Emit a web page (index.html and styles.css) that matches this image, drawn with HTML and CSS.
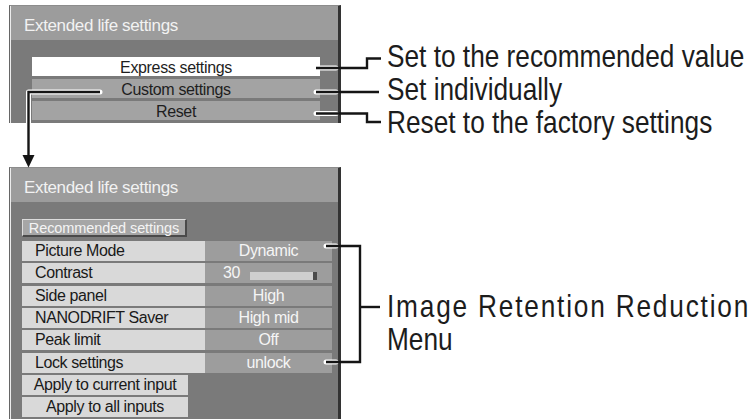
FILE: index.html
```html
<!DOCTYPE html>
<html lang="en">
<head>
<meta charset="utf-8">
<title>Extended life settings</title>
<link rel="stylesheet" href="styles.css">
</head>
<body>
<div class="page">
  <section class="group group-top">
    <div class="panel panel-top">
      <div class="frame">
        <div class="title">Extended life settings</div>
        <div class="body body-top">
          <div class="btn selected">Express settings</div>
          <div class="btn">Custom settings</div>
          <div class="btn">Reset</div>
        </div>
      </div>
    </div>
    <div class="notes notes-top">
      <p>Set to the recommended value</p>
      <p>Set individually</p>
      <p>Reset to the factory settings</p>
    </div>
  </section>

  <section class="group group-bottom">
    <div class="panel panel-bottom">
      <div class="frame">
        <div class="title">Extended life settings</div>
        <div class="body body-bottom">
          <div class="rec">Recommended settings</div>
          <ul class="rows">
            <li class="row"><span class="label">Picture Mode</span><span class="value">Dynamic</span></li>
            <li class="row"><span class="label">Contrast</span><span class="value value-slider"><span class="num">30</span><span class="bar"><span class="knob"></span></span></span></li>
            <li class="row"><span class="label">Side panel</span><span class="value">High</span></li>
            <li class="row"><span class="label">NANODRIFT Saver</span><span class="value">High mid</span></li>
            <li class="row"><span class="label">Peak limit</span><span class="value">Off</span></li>
            <li class="row"><span class="label">Lock settings</span><span class="value">unlock</span></li>
            <li class="apply">Apply to current input</li>
            <li class="apply">Apply to all inputs</li>
          </ul>
        </div>
      </div>
    </div>
    <div class="notes notes-bottom">
      <p class="spread">Image Retention Reduction</p>
      <p>Menu</p>
    </div>
  </section>

  <svg class="connectors" width="751" height="419" viewBox="0 0 751 419" aria-hidden="true">
    <g class="halo">
      <path d="M316 68 H336"/>
      <path d="M316 92 H336"/>
      <path d="M316 113.5 H336"/>
      <path d="M100 92 H28.5 V123"/>
      <path d="M326 246 H336"/>
      <path d="M326 362 H336"/>
    </g>
    <g class="line">
      <path d="M316 68 H367 V58.5 H381"/>
      <path d="M316 92 H379"/>
      <path d="M316 113.5 H367 V122 H381"/>
      <path d="M100 92 H28.5 V157"/>
      <path d="M326 246 H360 V362 H326"/>
      <path d="M360 307 H380"/>
    </g>
    <polygon class="head" points="22.5,155 34.5,155 28.5,167.5"/>
  </svg>
</div>
</body>
</html>
```

FILE: styles.css
```css
html, body {
  margin: 0;
  background: #ffffff;
}

body {
  font-family: "Liberation Sans", Arial, sans-serif;
}

.page {
  position: relative;
  width: 751px;
  height: 419px;
  overflow: hidden;
  padding-top: 5px;
  box-sizing: border-box;
}

.group {
  display: flex;
  align-items: flex-start;
}

.group-top {
  height: 162px;
}

.panel {
  flex: none;
  margin-left: 9px;
  width: 332px;
  box-sizing: border-box;
  border-left: 1px solid #666666;
  border-right: 3px solid #333333;
  border-top: 1px solid #8c8c8c;
  background: #7a7a7a;
  overflow: hidden;
}

.panel-top {
  height: 118px;
}

.panel-bottom {
  height: 262px;
}

.frame {
  height: 100%;
  border-left: 1px solid #ececec;
}

.title {
  height: 34px;
  box-sizing: border-box;
  padding: 11px 0 0 13px;
  line-height: 18px;
  font-size: 17px;
  letter-spacing: -0.35px;
  color: #f2f2f2;
  background: #9c9c9c;
}

/* top panel buttons */
.body-top {
  display: flex;
  flex-direction: column;
  gap: 3px;
  padding: 17px 0 0 21px;
}

.btn {
  width: 288px;
  height: 19px;
  box-sizing: border-box;
  padding-top: 3px;
  line-height: 16px;
  font-size: 16px;
  letter-spacing: -0.35px;
  text-align: center;
  color: #1e1e1e;
  background: #a3a3a3;
}

.btn.selected {
  background: #ffffff;
}

/* bottom panel */
.body-bottom {
  padding: 17px 0 0 11px;
}

.rec {
  width: 165px;
  height: 18px;
  box-sizing: border-box;
  border-top: 1px solid #dcdcdc;
  border-left: 1px solid #dcdcdc;
  border-right: 2px solid #4a4a4a;
  border-bottom: 2px solid #4a4a4a;
  padding-top: 1px;
  line-height: 15px;
  font-size: 14.5px;
  letter-spacing: -0.1px;
  text-align: center;
  color: #f4f4f4;
  background: #a6a6a6;
}

.rows {
  list-style: none;
  margin: 4px 0 0;
  padding: 0;
  display: flex;
  flex-direction: column;
  gap: 2.33px;
}

.row {
  display: flex;
  height: 20px;
}

.label,
.value,
.apply {
  height: 20px;
  box-sizing: border-box;
  padding-top: 2px;
  line-height: 16px;
  font-size: 16px;
  letter-spacing: -0.4px;
  white-space: nowrap;
}

.label {
  width: 183px;
  padding-left: 13px;
  color: #1a1a1a;
  background: #d9d9d9;
}

.value {
  width: 127px;
  text-align: center;
  color: #f5f5f5;
  background: #9d9d9d;
}

.value-slider {
  display: flex;
  align-items: flex-start;
  padding-left: 18px;
  text-align: left;
}

.num {
  width: 27px;
}

.bar {
  display: flex;
  justify-content: flex-end;
  width: 67px;
  height: 8px;
  margin-top: 7px;
  background: #cfcfcf;
}

.knob {
  width: 4px;
  height: 8px;
  background: #4a4a4a;
}

.apply {
  width: 166px;
  text-align: center;
  color: #1a1a1a;
  background: #d9d9d9;
}

/* annotations: condensed face emulated by horizontal scaling */
.notes {
  flex: 1;
  min-width: 0;
  margin-left: 46px;
  font-family: "Liberation Sans", Arial, sans-serif;
  font-size: 32px;
  line-height: 33px;
  color: #1c1c1c;
  white-space: nowrap;
}

.notes p {
  margin: 0;
  width: 364px;
  transform: scaleX(0.82);
  transform-origin: left center;
}

.notes-top {
  padding-top: 35.4px;
}

.notes-bottom {
  padding-top: 123.4px;
}

.spread {
  letter-spacing: 2.2px;
}

/* connector lines */
.connectors {
  position: absolute;
  left: 0;
  top: 0;
  pointer-events: none;
}

.halo path {
  fill: none;
  stroke: #ffffff;
  stroke-width: 5;
  stroke-linecap: round;
  stroke-linejoin: round;
}

.line path {
  fill: none;
  stroke: #151515;
  stroke-width: 2.4;
  stroke-linecap: butt;
  stroke-linejoin: miter;
}

.head {
  fill: #151515;
}
```
